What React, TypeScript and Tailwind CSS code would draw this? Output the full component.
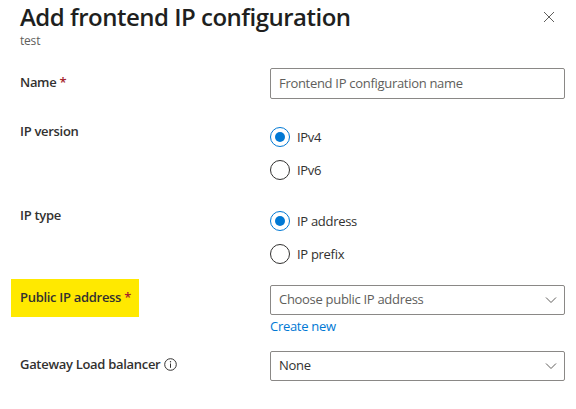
function Radio({ label, checked }: { label: string; checked?: boolean }) {
  return (
    <div className="flex items-center h-5">
      <span
        className={
          checked
            ? "flex items-center justify-center w-5 h-5 rounded-full border border-[#0078d4]"
            : "flex items-center justify-center w-5 h-5 rounded-full border border-[#323130]"
        }
      >
        {checked && <span className="w-[10px] h-[10px] rounded-full bg-[#0078d4]" />}
      </span>
      <span className="ml-[7px] text-[13px] leading-5 tracking-[-0.3px] text-[#323130]">{label}</span>
    </div>
  );
}

function Chevron() {
  return (
    <svg width="12" height="8" viewBox="0 0 12 8" className="shrink-0">
      <polyline points="1,1.5 6,6.5 11,1.5" fill="none" stroke="#605e5c" strokeWidth="1" />
    </svg>
  );
}

function Dropdown({ value, muted }: { value: string; muted?: boolean }) {
  return (
    <div className="flex items-center justify-between h-[30px] border border-[#8a8886] rounded-[2px] pl-2 pr-[7px]">
      <span
        className={
          muted
            ? "text-[13px] tracking-[-0.3px] text-[#605e5c]"
            : "text-[13px] tracking-[-0.3px] text-[#323130]"
        }
      >
        {value}
      </span>
      <Chevron />
    </div>
  );
}

export default function App() {
  return (
    <div
      className="w-[576px] h-[409px] overflow-hidden bg-white pl-5 pr-[11px] text-[#323130]"
      style={{ fontFamily: '"Open Sans", "Noto Sans", sans-serif' }}
    >
      <div className="flex justify-between items-start pt-[1px]">
        <div>
          <h1 className="text-[24px] leading-8 font-semibold tracking-[-0.5px] text-[#201f1e]">
            Add frontend IP configuration
          </h1>
          <p className="text-[12px] leading-4 tracking-[-0.2px] text-[#605e5c]">test</p>
        </div>
        <svg width="12" height="12" viewBox="0 0 12 12" className="mt-[10px] mr-[10px]">
          <path d="M1 1 L11 11 M11 1 L1 11" stroke="#605e5c" strokeWidth="1" />
        </svg>
      </div>

      <div className="grid grid-cols-[250px_295px] items-start mt-[19px]">
        <div className="pt-1 text-[13px] leading-5 font-semibold tracking-[-0.3px]">
          Name <span className="text-[#a4262c]">*</span>
        </div>
        <div className="flex items-center h-[31px] border border-[#8a8886] rounded-[2px] px-2 text-[13px] tracking-[-0.3px] text-[#605e5c]">
          Frontend IP configuration name
        </div>
      </div>

      <div className="grid grid-cols-[250px_295px] items-start mt-[22px]">
        <div className="text-[13px] leading-5 font-semibold tracking-[-0.3px]">IP version</div>
        <div className="flex flex-col gap-[13px] pt-[6px]">
          <Radio label="IPv4" checked />
          <Radio label="IPv6" />
        </div>
      </div>

      <div className="grid grid-cols-[250px_295px] items-start mt-[25px]">
        <div className="text-[13px] leading-5 font-semibold tracking-[-0.3px]">IP type</div>
        <div className="flex flex-col gap-[13px] pt-[6px]">
          <Radio label="IP address" checked />
          <Radio label="IP prefix" />
        </div>
      </div>

      <div className="grid grid-cols-[250px_295px] items-start mt-[15px]">
        <div>
          <div className="inline-flex items-center h-[38px] -ml-[9px] pl-[9px] pr-2 bg-[#ffe900] text-[13px] font-semibold tracking-[-0.3px]">
            Public IP address&nbsp;<span className="text-[#a4262c]">*</span>
          </div>
        </div>
        <div className="pt-[6px]">
          <Dropdown value="Choose public IP address" muted />
          <div className="mt-[1px] text-[13px] leading-5 tracking-[-0.3px] text-[#0078d4]">Create new</div>
        </div>
      </div>

      <div className="grid grid-cols-[250px_295px] items-start mt-[15px]">
        <div className="flex items-center gap-1 pt-[3px] text-[13px] leading-5 font-semibold tracking-[-0.3px]">
          Gateway Load balancer
          <svg width="13" height="13" viewBox="0 0 13 13">
            <circle cx="6.5" cy="6.5" r="5.8" fill="none" stroke="#323130" strokeWidth="1" />
            <line x1="6.5" y1="5.5" x2="6.5" y2="9.8" stroke="#323130" strokeWidth="1" />
            <circle cx="6.5" cy="3.7" r="0.7" fill="#323130" />
          </svg>
        </div>
        <Dropdown value="None" />
      </div>
    </div>
  );
}
